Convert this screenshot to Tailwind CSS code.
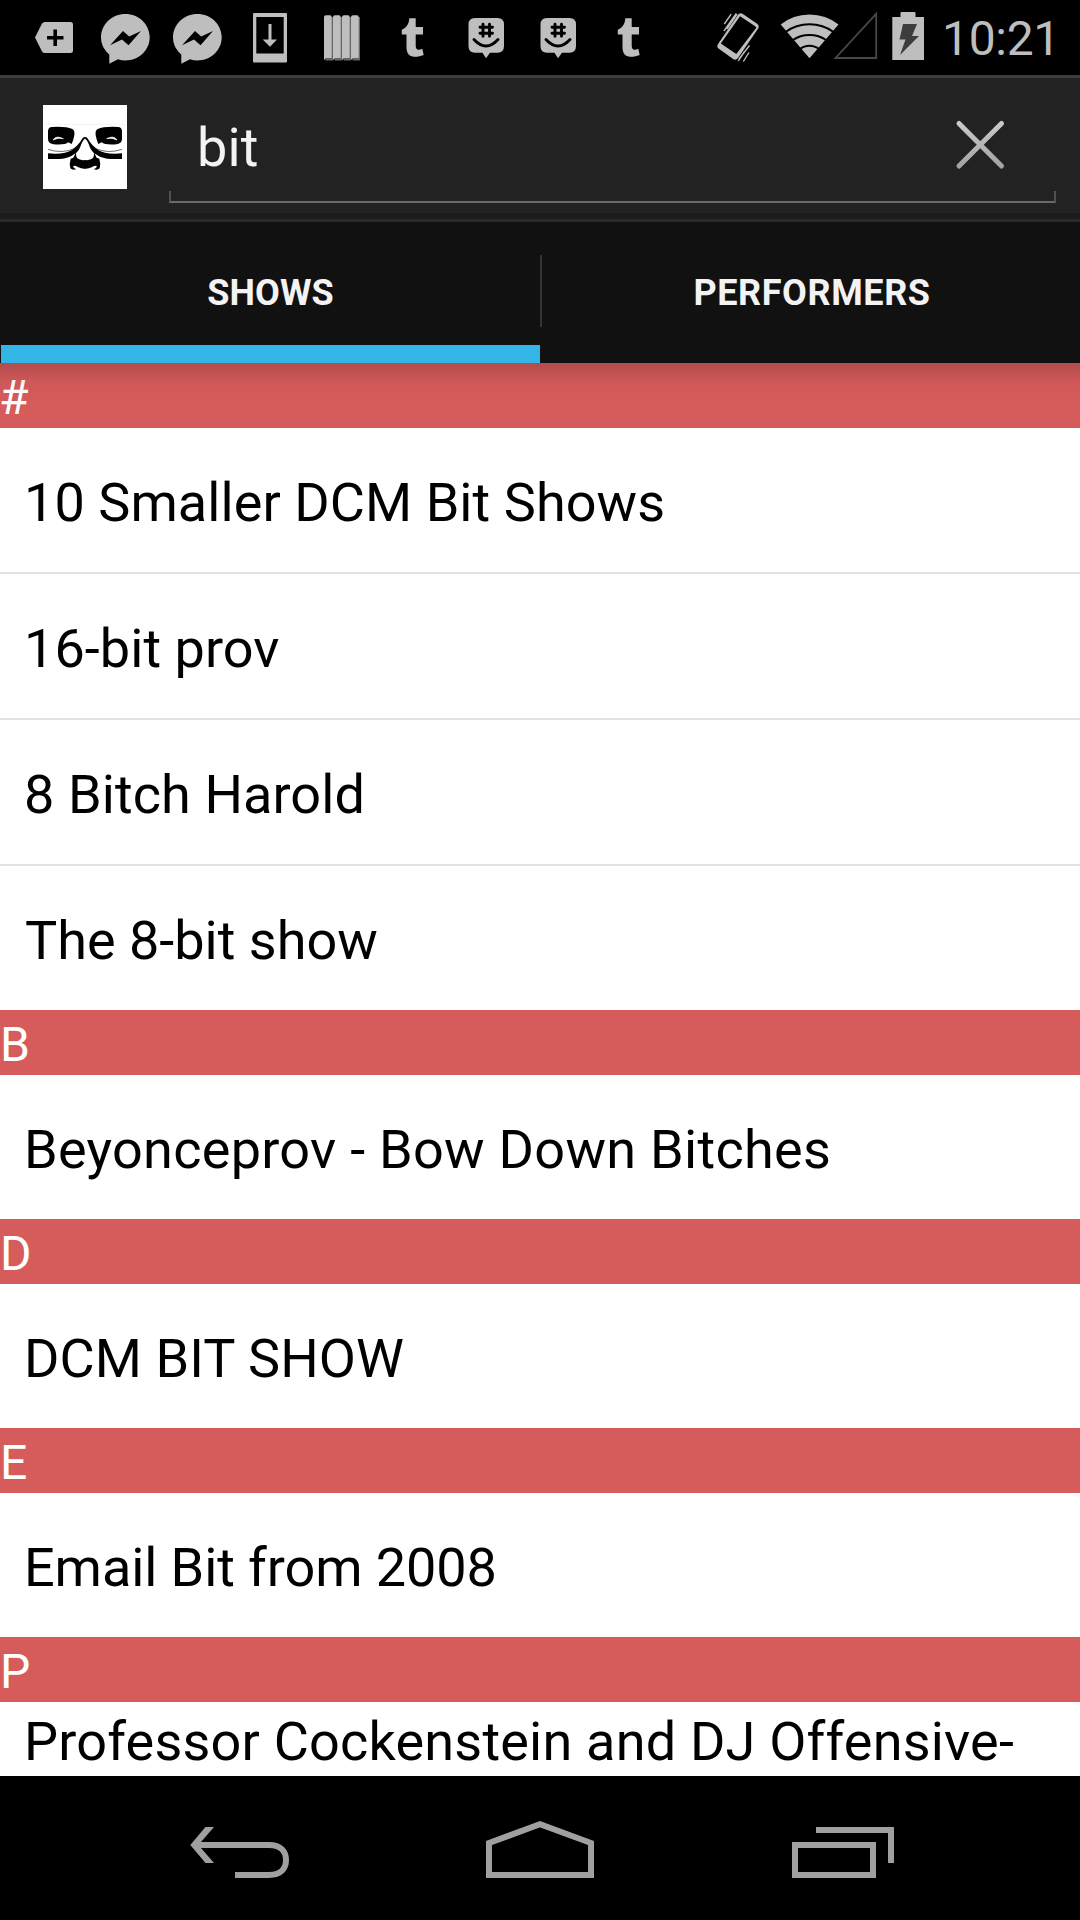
<!DOCTYPE html>
<html lang="en">
<head>
<meta charset="utf-8">
<title>Search shows</title>
<script src="https://cdn.jsdelivr.net/npm/@tailwindcss/browser@4"></script>
</head>
<body class="bg-black">
<div class="flex h-[1920px] w-[1080px] flex-col overflow-hidden bg-black font-[Roboto,sans-serif]">

  <!-- Status bar -->
  <header class="flex h-[75px] shrink-0 items-center bg-black pl-[18px] text-[#bebebe]">
    <svg class="h-[75px] w-[72px]" viewBox="18 0 72 75" fill="currentColor"><path d="M35 37.5 42 23.5Q43 22 45 22H70.500Q73 22 73 24.500V50.500Q73 53 70.500 53H45Q43 53 42 51.500Z"/><path d="M47 37.700H63.500M55.200 29.500V46" stroke="#000" stroke-width="3.600"/></svg>
    <svg class="h-[75px] w-[72px]" viewBox="90 0 72 75" fill="currentColor"><path d="M125.300 14C139 14 149.700 24.500 149.700 37.300S139 60.500 125.300 60.500Q121.500 60.500 118 59.300L109.300 63.800V54.500C104 50 101 44 101 37.300 101 24.500 112 14 125.300 14Z"/><path d="M110 45.200 123 31 129.200 36.600 141 31 128.500 45.200 122 39.500Z" fill="#000"/></svg>
    <svg class="h-[75px] w-[72px]" viewBox="90 0 72 75" fill="currentColor"><path d="M125.300 14C139 14 149.700 24.500 149.700 37.300S139 60.500 125.300 60.500Q121.500 60.500 118 59.300L109.300 63.800V54.500C104 50 101 44 101 37.300 101 24.500 112 14 125.300 14Z"/><path d="M110 45.200 123 31 129.200 36.600 141 31 128.500 45.200 122 39.500Z" fill="#000"/></svg>
    <svg class="h-[75px] w-[72px]" viewBox="234 0 72 75" fill="currentColor"><path fill-rule="evenodd" d="M254 13H286Q287 13 287 14V61.500Q287 62.500 286 62.500H254Q253 62.500 253 61.500V14Q253 13 254 13ZM256.300 17V53.500H283.700V17Z"/><path d="M268.500 24H271.500V39.500H277L270 46.700 262.700 39.500H268.500Z"/></svg>
    <svg class="h-[75px] w-[72px]" viewBox="306 0 72 75"><g fill="#666"><path d="M324 17H333V60.500H325.500ZM333 17H342V60.500H334.500ZM342 17H351V60.500H343.500ZM351 17H360V60.500H352.500Z"/></g><g fill="currentColor"><path d="M324 17Q324 15.200 326 15.200H330Q331.700 15.200 331.700 17V58H326L324 60ZM333 17Q333 15.200 335 15.200H339Q340.700 15.200 340.700 17V58H335L333 60ZM342 17Q342 15.200 344 15.200H348Q349.700 15.200 349.700 17V58H344L342 60ZM351 17Q351 15.200 353 15.200H357Q358.700 15.200 358.700 17V58H353L351 60Z"/></g></svg>
    <svg class="h-[75px] w-[72px]" viewBox="378 0 72 75" fill="currentColor"><path d="M409.300 18.300H415.700V27H423V34.600H415.700V45.500C415.700 50.500 418.500 50.500 422.300 48.800L423.700 55C415 58.500 406.500 57.500 406.500 47.500V34.600H401.800V29.800C407 27.500 409 23.500 409.300 18.300Z"/></svg>
    <svg class="h-[75px] w-[72px]" viewBox="450 0 72 75" fill="currentColor"><path d="M475 18H497.500Q504 18 504 24.500V46Q504 52.700 497.500 52.700H490L486 58.200 482.500 52.700H475Q468.500 52.700 468.500 46V24.500Q468.500 18 475 18Z"/><path d="M483 24.200V36.200M489.500 24.200V36.200M480 27.300H492.500M480 33.200H492.500M474 39.500Q486 52.500 498 39.500" fill="none" stroke="#000" stroke-width="2.900" stroke-linecap="round"/></svg>
    <svg class="h-[75px] w-[72px]" viewBox="450 0 72 75" fill="currentColor"><path d="M475 18H497.500Q504 18 504 24.500V46Q504 52.700 497.500 52.700H490L486 58.200 482.500 52.700H475Q468.500 52.700 468.500 46V24.500Q468.500 18 475 18Z"/><path d="M483 24.200V36.200M489.500 24.200V36.200M480 27.300H492.500M480 33.200H492.500M474 39.500Q486 52.500 498 39.500" fill="none" stroke="#000" stroke-width="2.900" stroke-linecap="round"/></svg>
    <svg class="h-[75px] w-[72px]" viewBox="378 0 72 75" fill="currentColor"><path d="M409.300 18.300H415.700V27H423V34.600H415.700V45.500C415.700 50.500 418.500 50.500 422.300 48.800L423.700 55C415 58.500 406.500 57.500 406.500 47.500V34.600H401.800V29.800C407 27.500 409 23.500 409.300 18.300Z"/></svg>
    <!-- Vibrate -->
    <svg class="ml-[44px] h-[75px] w-[60px]" viewBox="710 0 60 75" fill="currentColor"><path fill-rule="evenodd" d="M738.500 14Q740.500 12.500 742.500 13.700L757.500 24Q759.500 25.500 758.500 28L738 58Q736 60.500 733.500 59.300L718.500 48.500Q716.500 47 717.700 44.500ZM740 16.300 720.800 43.500 736.300 54 756.500 27.500 754.500 25.700Z"/><path d="M724.300 24 731.200 14.200M724 31 736.300 13.500M738.300 60.800 744.500 51.500M743.300 61.500 749 52.500M739 59 749.500 45.500M727 29 737 14" fill="none" stroke="currentColor" stroke-width="1.400"/></svg>
    <!-- Wi-Fi -->
    <svg class="ml-2 h-[75px] w-[62px]" viewBox="778 0 62 75"><path d="M809.500 58.300 780.700 24.500Q793 14.500 809.500 14.500T838.500 24.500Z" fill="currentColor"/><path d="M785.500 32Q796 24.300 809.500 24.300T833.500 32M792.500 40.300Q800 35 809.500 35T826.500 40.300M800 49Q804 45.700 809.500 45.700T819 49" fill="none" stroke="#000" stroke-width="2"/></svg>
    <!-- Signal -->
    <svg class="-ml-[10px] h-[75px] w-[52px]" viewBox="830 0 52 75"><path d="M835.500 58H876.200V13.800Z" fill="none" stroke="#484848" stroke-width="1.800"/></svg>
    <!-- Battery -->
    <svg class="h-[75px] w-[50px]" viewBox="882 0 50 75"><path d="M900.500 17V13Q900.500 12 901.500 12H914.500Q915.500 12 915.500 13V17H924V60H892.300V17Z" fill="currentColor"/><path d="M903 24H917L912 36H919L900 55 905.500 39.500H899.500Z" fill="#3d3d3d"/></svg>
    <span class="ml-[10px] pt-[2px] text-[48px] leading-[78px] tracking-[-0.3px]">10:21</span>
  </header>

  <!-- Action bar -->
  <div class="flex h-[147px] shrink-0 border-y-[3px] border-t-[#3d3d3d] border-b-[#2a2a2a] bg-[#1b1b1b]">
    <div class="flex h-[135px] w-full items-start bg-[#222] pl-[43px]">
      <svg class="mt-[27px] size-[84px] bg-white" viewBox="129 105 252 252">
        <path d="M131 163H379" stroke="#eee" stroke-width="2"/>
        <g id="half">
          <path d="M144 182Q145 172 156 171Q198 169 217 177Q225 181 223 196Q220 212 215 222L205 217Q195 226 160 223Q144 220 144 208Z"/>
          <path d="M159 210Q168 195 190 206Q174 202 159 210" fill="#fff" stroke="#fff" stroke-width="2"/>
          <path d="M144 238Q185 252 223 236" fill="none" stroke="#222" stroke-width="2"/>
          <path d="M144 250Q195 254 216 240Q238 222 244 210Q250 199 256 202L254 207Q247 212 241 230Q235 246 222 253Q205 266 180 267H144Z"/>
          <path d="M256 270Q240 272 232 265Q226 258 229 244L223 257Q222 264 212 266Q207 282 211 295Q216 301 229 298Q219 294 220 288Q227 285 235 292Q245 297 256 296Z"/>
        </g>
        <use href="#half" transform="matrix(-1 0 0 1 510 0)"/>
      </svg>
      <div class="relative ml-[42px] flex h-[125px] w-[887px] justify-between">
        <span class="pl-[28px] pt-[30px] text-[54px] leading-[80px] tracking-[0.2px] text-[#f3f3f3]">bit</span>
        <svg class="mr-[49px] mt-[40px] size-[54px]" viewBox="953 118 54 54"><defs><linearGradient id="x" gradientUnits="userSpaceOnUse" x1="0" y1="122" x2="0" y2="168"><stop stop-color="#cacaca"/><stop offset="1" stop-color="#a2a2a2"/></linearGradient></defs><path d="M959 123.500 1001.500 166M1001.500 123.500 959 166" stroke="url(#x)" stroke-width="5" stroke-linecap="round"/></svg>
        <div class="absolute inset-x-0 bottom-0 h-3 border-x-2 border-b-2 border-x-[#505050] border-b-[#6a6a6a]"></div>
      </div>
    </div>
  </div>

  <!-- Tabs -->
  <nav class="relative z-10 flex h-[141px] shrink-0 bg-[#111] text-[36px] font-bold leading-[42px] text-[#f3f3f3]">
    <div class="flex w-[540px] flex-col items-center justify-between pt-[50px]">
      <span class="pl-px tracking-[0.1px]">SHOWS</span>
      <div class="ml-px h-[18px] w-[539px] bg-[#33b5e5]"></div>
    </div>
    <div class="mt-[33px] h-[72px] w-[2px] bg-[#333]"></div>
    <div class="flex flex-1 justify-center pt-[50px]"><span class="pl-[2px] tracking-[0.6px]">PERFORMERS</span></div>
    <div class="absolute inset-x-0 top-full h-[40px] bg-linear-to-b from-black/17 via-black/4 via-45% to-transparent"></div>
  </nav>

  <!-- Results -->
  <main class="h-[1413px] shrink-0 overflow-hidden bg-white text-[54px] leading-[64px] text-black">
    <h2 class="-indent-px h-[65px] bg-[#d65b5b] pt-1 text-[48px] leading-[61px] text-white">#</h2>
    <ul class="divide-y-2 divide-[#e3e3e3]">
      <li class="h-[146px] pl-6 pt-[43px] tracking-[0.07px]">10 Smaller DCM Bit Shows</li>
      <li class="h-[146px] pl-6 pt-[43px] tracking-[0.07px]">16-bit prov</li>
      <li class="h-[146px] pl-6 pt-[43px] tracking-[0.1px]">8 Bitch Harold</li>
      <li class="h-[144px] pl-[25px] pt-[43px]">The 8-bit show</li>
    </ul>
    <h2 class="h-[65px] bg-[#d65b5b] pt-1 text-[48px] leading-[61px] text-white">B</h2>
    <p class="h-[144px] pl-6 pt-[43px] tracking-[0.29px]">Beyonceprov - Bow Down Bitches</p>
    <h2 class="h-[65px] bg-[#d65b5b] pt-1 text-[48px] leading-[61px] text-white">D</h2>
    <p class="h-[144px] pl-6 pt-[43px] tracking-[0.1px]">DCM BIT SHOW</p>
    <h2 class="h-[65px] bg-[#d65b5b] pt-1 text-[48px] leading-[61px] text-white">E</h2>
    <p class="h-[144px] pl-6 pt-[43px] tracking-[-0.08px]">Email Bit from 2008</p>
    <h2 class="h-[65px] bg-[#d65b5b] pt-1 text-[48px] leading-[61px] text-white">P</h2>
    <p class="h-[74px] pl-6 pt-[8px] tracking-[0.2px]">Professor Cockenstein and DJ Offensive-</p>
  </main>

  <!-- Navigation bar -->
  <footer class="flex h-[144px] shrink-0 items-center bg-black pl-[180px] text-[#a0a0a0]">
    <svg class="h-[144px] w-[120px]" viewBox="180 1776 120 144"><path d="M190.300 1845 205.500 1827H214L201 1842H270V1848H201L214 1863H205.500Z" fill="currentColor"/><path d="M269 1845C281 1845 286 1851.500 286 1860S281 1875 269 1875H235" fill="none" stroke="currentColor" stroke-width="6"/></svg>
    <svg class="ml-[180px] h-[144px] w-[120px]" viewBox="480 1776 120 144"><path d="M489 1843 540 1824.300 591 1843V1875H489Z" fill="none" stroke="currentColor" stroke-width="6"/></svg>
    <svg class="ml-[180px] h-[144px] w-[130px]" viewBox="780 1776 130 144"><path d="M795 1845H873V1875H795ZM816 1830H891V1863" fill="none" stroke="currentColor" stroke-width="6"/></svg>
  </footer>
</div>
</body>
</html>
